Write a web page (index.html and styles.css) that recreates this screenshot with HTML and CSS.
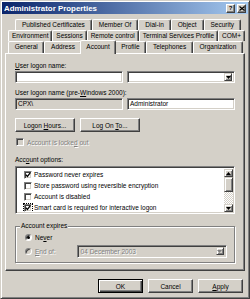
FILE: index.html
```html
<!DOCTYPE html>
<html>
<head>
<meta charset="utf-8">
<link rel="stylesheet" href="styles.css">
</head>
<body>
<div class="window">
  <div class="titlebar">
    <span class="title">Administrator Properties</span>
    <div class="tbtns">
      <span class="tbtn help">?</span>
      <span class="tbtn close"><svg width="6" height="5" viewBox="0 0 6 5"><path d="M0.5 0.5l5 4M5.5 0.5l-5 4" stroke="#000" stroke-width="1.2"/></svg></span>
    </div>
  </div>
  <div class="content">
    <div class="tabs">
      <div class="tabrow row1">
        <span class="tab">Published Certificates</span>
        <span class="tab">Member Of</span>
        <span class="tab">Dial-in</span>
        <span class="tab">Object</span>
        <span class="tab">Security</span>
      </div>
      <div class="tabrow row2">
        <span class="tab">Environment</span>
        <span class="tab">Sessions</span>
        <span class="tab">Remote control</span>
        <span class="tab">Terminal Services Profile</span>
        <span class="tab">COM+</span>
      </div>
      <div class="tabrow row3">
        <span class="tab">General</span>
        <span class="tab">Address</span>
        <span class="tab active">Account</span>
        <span class="tab">Profile</span>
        <span class="tab">Telephones</span>
        <span class="tab">Organization</span>
      </div>
    </div>
    <div class="panel">
      <div class="lbl"><u>U</u>ser logon name:</div>
      <div class="pair">
        <div class="field"></div>
        <div class="field combo"><span class="val"></span><span class="arrowbtn"><svg width="5" height="3" viewBox="0 0 5 3"><path d="M0 0h5L2.5 3z"/></svg></span></div>
      </div>
      <div class="lbl lbl2">User logon name (pre-<u>W</u>indows 2000):</div>
      <div class="pair">
        <div class="field disabled-field">CPX\</div>
        <div class="field">Administrator</div>
      </div>
      <div class="btnrow">
        <span class="btn wide"><span>Logon <u>H</u>ours...</span></span>
        <span class="btn wide"><span>Log On <u>T</u>o...</span></span>
      </div>
      <div class="chkrow disabled">
        <span class="chk chk-dis"></span>
        <span>Account is locke<u>d</u> out</span>
      </div>
      <div class="lbl lbl3">Acc<u>o</u>unt options:</div>
      <div class="listbox">
        <div class="items">
          <div class="item"><span class="chk"><svg width="6" height="6" viewBox="0 0 6 6"><path d="M0.8 2.6l1.6 1.8 2.8-3.6" stroke="#000" stroke-width="1.3" fill="none"/></svg></span><span>Password never expires</span></div>
          <div class="item"><span class="chk"></span><span>Store password using reversible encryption</span></div>
          <div class="item"><span class="chk"></span><span>Account is disabled</span></div>
          <div class="item"><span class="chk focus"><svg width="6" height="6" viewBox="0 0 6 6"><path d="M0.8 2.6l1.6 1.8 2.8-3.6" stroke="#000" stroke-width="1.3" fill="none"/></svg></span><span>Smart card is required for interactive logon</span></div>
        </div>
        <div class="scrollbar">
          <span class="sbtn"><svg width="5" height="3" viewBox="0 0 5 3"><path d="M0 3h5L2.5 0z"/></svg></span>
          <span class="thumb"></span>
          <span class="track"></span>
          <span class="sbtn"><svg width="5" height="3" viewBox="0 0 5 3"><path d="M0 0h5L2.5 3z"/></svg></span>
        </div>
      </div>
      <div class="group">
        <span class="legend">Account expires</span>
        <div class="radrow">
          <span class="radio on"></span><span>Ne<u>v</u>er</span>
        </div>
        <div class="radrow endrow">
          <span class="radio rad-dis"></span><span class="distext"><u>E</u>nd of:</span>
          <div class="datepick"><span class="dateval">04 December 2003</span><span class="arrowbtn dis"><svg width="5" height="3" viewBox="0 0 5 3"><path d="M0 0h5L2.5 3z" fill="#808080"/></svg></span></div>
        </div>
      </div>
    </div>
    <div class="dlgbtns">
      <span class="btn dbtn default"><span>OK</span></span>
      <span class="btn dbtn"><span>Cancel</span></span>
      <span class="btn dbtn"><span><u>A</u>pply</span></span>
    </div>
  </div>
</div>
</body>
</html>
```

FILE: styles.css
```css
* { box-sizing: border-box; }
html, body { margin: 0; padding: 0; }
body {
  width: 250px; height: 299px; overflow: hidden;
  background: #d4d0c8;
  font-family: "Liberation Sans", Arial, sans-serif;
  font-size: 6.5px; color: #000;
}
u { text-decoration-thickness: 1px; text-underline-offset: 1px; }

.window {
  width: 250px; height: 299px;
  border: 1px solid; border-color: #d4d0c8 #404040 #404040 #d4d0c8;
  box-shadow: inset 1px 1px #fff, inset -1px -1px #808080;
  padding: 1px;
  display: flex; flex-direction: column;
}
.titlebar {
  height: 12px; flex: none;
  background: linear-gradient(to right, #0a246a, #a6caf0);
  display: flex; align-items: center; justify-content: space-between;
  padding: 0 2px 0 2px;
}
.title { color: #fff; font-weight: bold; font-size: 7.9px; }
.tbtns { display: flex; gap: 2px; }
.tbtn {
  width: 9px; height: 9px; background: #d4d0c8;
  border: 1px solid; border-color: #fff #404040 #404040 #fff;
  box-shadow: inset -1px -1px #808080;
  display: flex; align-items: center; justify-content: center;
  font-weight: bold; font-size: 6px; line-height: 1;
}

.content { padding: 5px 3px 0; }

.tabs { display: flex; flex-direction: column; }
.tabrow { display: flex; height: 11px; }
.row1 { margin: 0 4px 0 10px; }
.row2 { margin: 0 0 0 3px; }
.row3 { margin: 0 2px 0 3px; height: 12px; }
.tab {
  flex: 1 1 auto;
  border-top: 1px solid #fff; border-left: 1px solid #fff; border-right: 1px solid #404040;
  box-shadow: inset -1px 0 #808080;
  border-radius: 2px 2px 0 0;
  text-align: center; line-height: 9px; white-space: nowrap;
  padding: 0 2px;
  background: #d4d0c8;
}
.tab.active {
  position: relative; z-index: 1;
  margin: -1px -2px -1px; height: 14px; line-height: 11px;
}

.panel {
  height: 218px;
  border: 1px solid; border-color: #fff #404040 #404040 #fff;
  box-shadow: inset -1px -1px #808080;
  padding: 8px 9px 0 9px;
  display: flex; flex-direction: column;
}
.lbl { height: 8px; line-height: 8px; margin-bottom: 1px; white-space: nowrap; }
.lbl2 { margin-top: 6px; }
.lbl3 { margin-top: 10px; margin-bottom: 2px; }

.pair { display: flex; gap: 4px; }
.field {
  width: 108px; height: 12px; background: #fff;
  border: 1px solid; border-color: #808080 #fff #fff #808080;
  box-shadow: inset 1px 1px #404040, inset -1px -1px #d4d0c8;
  padding: 0 2px; line-height: 10px; white-space: nowrap;
}
.disabled-field { background: #d4d0c8; }
.combo { display: flex; justify-content: space-between; align-items: center; padding: 0 2px 0 2px; }
.arrowbtn {
  width: 8px; height: 8px; background: #d4d0c8;
  border: 1px solid; border-color: #d4d0c8 #404040 #404040 #d4d0c8;
  box-shadow: inset 1px 1px #fff, inset -1px -1px #808080;
  display: flex; align-items: center; justify-content: center;
}

.btnrow { display: flex; gap: 5px; margin-top: 8px; }
.btn {
  height: 14px; background: #d4d0c8;
  border: 1px solid; border-color: #fff #404040 #404040 #fff;
  box-shadow: inset -1px -1px #808080;
  display: flex; align-items: center; justify-content: center;
  white-space: nowrap;
}
.wide { width: 60px; }

.chk {
  width: 8px; height: 8px; background: #fff; flex: none;
  border: 1px solid; border-color: #808080 #fff #fff #808080;
  box-shadow: inset 1px 1px #404040, inset -1px -1px #d4d0c8;
  display: flex; align-items: center; justify-content: center;
}
.chk-dis { background: #d4d0c8; }
.chk.focus { outline: 1px dotted #000; outline-offset: 0; }
.chkrow { display: flex; align-items: center; gap: 3px; height: 8px; margin-top: 6px; padding-left: 1px; }
.disabled, .distext, .dateval { color: #808080; text-shadow: 1px 1px #fff; }

.listbox {
  height: 48px; background: #fff; flex: none;
  border: 1px solid; border-color: #808080 #fff #fff #808080;
  box-shadow: inset 1px 1px #404040, inset -1px -1px #d4d0c8;
  padding: 1px 1px 1px 1px;
  display: flex;
}
.items { flex: 1; padding: 1px 0 0 7px; overflow: hidden; }
.item { height: 11px; display: flex; align-items: center; gap: 2px; white-space: nowrap; }
.scrollbar { width: 9px; display: flex; flex-direction: column; padding-top: 1px; }
.sbtn {
  height: 8px; flex: none; background: #d4d0c8;
  border: 1px solid; border-color: #d4d0c8 #404040 #404040 #d4d0c8;
  box-shadow: inset 1px 1px #fff, inset -1px -1px #808080;
  display: flex; align-items: center; justify-content: center;
}
.thumb {
  height: 15px; flex: none; background: #d4d0c8;
  border: 1px solid; border-color: #d4d0c8 #404040 #404040 #d4d0c8;
  box-shadow: inset 1px 1px #fff, inset -1px -1px #808080;
}
.track { flex: 1; background: repeating-conic-gradient(#fff 0 25%, #d4d0c8 0 50%) 0 0 / 2px 2px; }

.group {
  position: relative; flex: none;
  margin-top: 12px; height: 37px;
  border: 1px solid #808080;
  box-shadow: inset 1px 1px #fff, 1px 1px #fff;
  padding: 6px 0 0 9px;
}
.legend {
  position: absolute; top: -5px; left: 4px;
  background: #d4d0c8; padding: 0 1px; line-height: 8px;
}
.radrow { display: flex; align-items: center; gap: 3px; height: 8px; }
.endrow { height: 12px; margin-top: 4px; }
.radio {
  width: 7px; height: 7px; border-radius: 50%; background: #fff; flex: none;
  border: 1px solid; border-color: #808080 #fff #fff #808080;
  box-shadow: inset 1px 1px #404040;
  display: flex; align-items: center; justify-content: center;
}
.radio.on::after { content: ""; width: 3px; height: 3px; border-radius: 50%; background: #000; }
.rad-dis { background: #d4d0c8; }
.datepick {
  margin-left: 18px; width: 150px; height: 13px; background: #d4d0c8;
  border: 1px solid; border-color: #808080 #fff #fff #808080;
  box-shadow: inset 1px 1px #404040, inset -1px -1px #d4d0c8;
  display: flex; justify-content: space-between; align-items: center;
  padding: 0 2px 0 3px;
}

.dlgbtns { display: flex; justify-content: flex-end; gap: 5px; margin-top: 8px; padding-right: 2px; }
.dbtn { width: 45px; }
.default { border-color: #000; box-shadow: inset 1px 1px #fff, inset -1px -1px #404040, inset -2px -2px #808080; }
```
